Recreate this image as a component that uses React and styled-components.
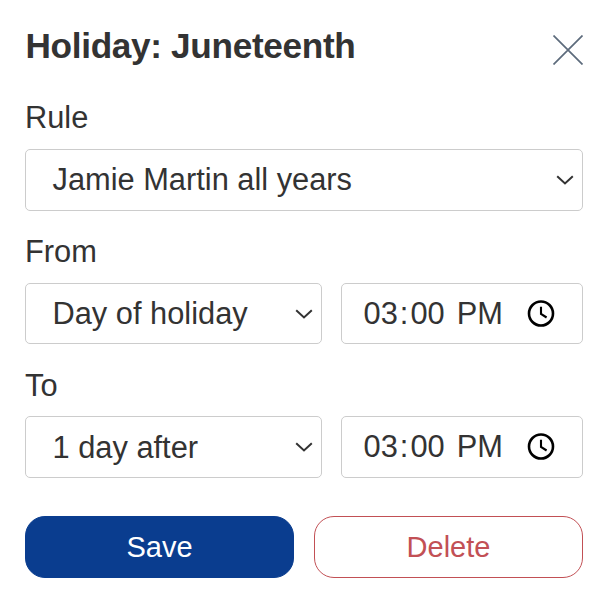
import React from "react";
import styled, { createGlobalStyle } from "styled-components";

const App = () => {
  return (
    <>
      <GlobalStyle />
      <Dialog>
        <Header>
          <Title>Holiday: Juneteenth</Title>
          <CloseButton type="button" aria-label="Close">
            <CloseIcon />
          </CloseButton>
        </Header>

        <Field>
          <Label>Rule</Label>
          <Select value="Jamie Martin all years" height={62} />
        </Field>

        <Field>
          <Label>From</Label>
          <FieldRow>
            <Select value="Day of holiday" height={61} />
            <TimeInput hours="03" minutes="00" period="PM" height={61} />
          </FieldRow>
        </Field>

        <Field>
          <Label $drop={1}>To</Label>
          <FieldRow>
            <Select value="1 day after" height={62} drop={2} />
            <TimeInput hours="03" minutes="00" period="PM" height={62} />
          </FieldRow>
        </Field>

        <Actions>
          <SaveButton type="button">Save</SaveButton>
          <DeleteButton type="button">Delete</DeleteButton>
        </Actions>
      </Dialog>
    </>
  );
};

export default App;

const Select = ({ value, height, drop }) => (
  <SelectBox type="button" $height={height}>
    <SelectValue $drop={drop}>{value}</SelectValue>
    <ChevronIcon />
  </SelectBox>
);

const TimeInput = ({ hours, minutes, period, height }) => (
  <TimeBox $height={height}>
    <TimePart>{hours}</TimePart>
    <TimePart>:</TimePart>
    <TimePart>{minutes}</TimePart>
    <TimePart $spaced>{period}</TimePart>
    <ClockIcon />
  </TimeBox>
);

const CloseIcon = () => (
  <svg width="30" height="30" viewBox="0 0 30 30" fill="none">
    <path d="M0.5 0.5L29.5 29.5M29.5 0.5L0.5 29.5" stroke="#5d6b7c" strokeWidth="1.7" />
  </svg>
);

const ChevronIcon = () => (
  <svg width="18" height="12" viewBox="0 0 18 12" fill="none">
    <path d="M1.2 2.2L9 9.4L16.8 2.2" stroke="#333" strokeWidth="2" />
  </svg>
);

const ClockIcon = () => (
  <Clock width="28" height="28" viewBox="0 0 28 28" fill="none">
    <circle cx="14" cy="13.5" r="12" stroke="#000" strokeWidth="2.6" />
    <path d="M14 6.7V14L19.6 17.5" stroke="#000" strokeWidth="2.1" />
  </Clock>
);

const GlobalStyle = createGlobalStyle`
  * {
    box-sizing: border-box;
  }
  body {
    margin: 0;
    background: #fff;
    color: #333;
    font-family: "Liberation Sans", Arial, sans-serif;
    font-size: 30.8px;
  }
  button {
    font-family: inherit;
    color: inherit;
    cursor: pointer;
  }
`;

const Dialog = styled.form`
  width: 609px;
  height: 604px;
  padding: 25px 26px 26px 25px;
  display: flex;
  flex-direction: column;
  overflow: hidden;
`;

const Header = styled.header`
  height: 70px;
  display: flex;
  justify-content: space-between;
  align-items: flex-start;
`;

const Title = styled.h1`
  margin: 0 0 0 0.5px;
  font-size: 35.2px;
  line-height: 42px;
  font-weight: bold;
  letter-spacing: -0.33px;
  white-space: nowrap;
`;

const CloseButton = styled.button`
  display: flex;
  margin-top: 10px;
  padding: 0;
  border: 0;
  background: none;
`;

const Field = styled.div`
  display: flex;
  flex-direction: column;
  margin-bottom: 18px;
`;

const Label = styled.span`
  height: 54px;
  padding-top: ${(props) => props.$drop || 0}px;
  line-height: 46px;
`;

const FieldRow = styled.div`
  display: grid;
  grid-template-columns: 297px 242px;
  gap: 19px;
`;

const SelectBox = styled.button`
  display: flex;
  align-items: center;
  justify-content: space-between;
  width: 100%;
  height: ${(props) => props.$height}px;
  padding: 0 8.5px 0 26.5px;
  border: 1px solid #ccc;
  border-radius: 5px;
  background: #fff;
  font-size: 30.8px;
`;

const SelectValue = styled.span`
  padding-top: ${(props) => props.$drop || 0}px;
  white-space: nowrap;
`;

const TimeBox = styled.div`
  display: flex;
  align-items: center;
  height: ${(props) => props.$height}px;
  padding: 0 27px 0 21.6px;
  border: 1px solid #ccc;
  border-radius: 5px;
`;

const TimePart = styled.span`
  padding-right: 2px;
  margin-left: ${(props) => (props.$spaced ? "10px" : "0")};
`;

const Clock = styled.svg`
  margin-left: auto;
`;

const Actions = styled.div`
  display: grid;
  grid-template-columns: 1fr 1fr;
  gap: 20px;
  margin-top: 20px;
`;

const Button = styled.button`
  height: 62px;
  padding: 0;
  border-radius: 20px;
  font-size: 29px;
`;

const SaveButton = styled(Button)`
  border: 1px solid #0a3d8f;
  background: #0a3d8f;
  color: #fff;
`;

const DeleteButton = styled(Button)`
  border: 1px solid #c25055;
  background: #fff;
  color: #c25055;
`;
